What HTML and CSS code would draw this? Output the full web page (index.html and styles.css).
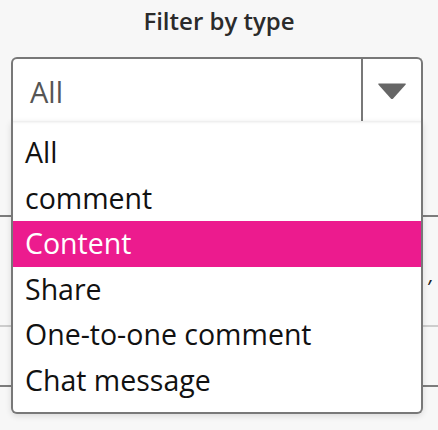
FILE: index.html
```html
<!DOCTYPE html>
<html lang="en">

<head>
    <meta charset="UTF-8">
    <meta name="viewport" content="width=device-width, initial-scale=1.0">
    <title>Filter</title>
    <link rel="stylesheet" href="styles.css">
</head>

<body>
    <main>
        <h2 class="title">Filter by type</h2>
        <div class="picker">
            <div class="select">
                <span class="value">All</span>
                <span class="arrow">
                    <svg width="30" height="18" viewBox="0 0 30 18">
                        <path d="M2 1.5 H28 Q29.5 1.5 28.5 2.7 L16.2 16.4 Q15 17.6 13.8 16.4 L1.5 2.7 Q0.5 1.5 2 1.5 Z" fill="#666"/>
                    </svg>
                </span>
            </div>
            <ul class="menu">
                <li>All</li>
                <li>comment</li>
                <li class="active">Content</li>
                <li>Share</li>
                <li>One-to-one comment</li>
                <li>Chat message</li>
            </ul>
        </div>
        <div class="rows">
            <div class="row row-a"></div>
            <div class="row row-b"><span class="tail">’</span></div>
            <div class="row row-c"></div>
        </div>
    </main>
</body>

</html>
```

FILE: styles.css
```css
* {
    margin: 0;
    padding: 0;
    box-sizing: border-box;
    list-style: none;
}

html,
body {
    width: 100%;
    height: 100%;
    background-color: #f7f7f7;
    font-family: "Open Sans", "Noto Sans", sans-serif;
    overflow: hidden;
}

.title {
    text-align: center;
    font-size: 24px;
    font-weight: 600;
    color: #2b2b2b;
    line-height: 30px;
    padding-top: 6px;
    height: 57px;
}

.picker {
    position: relative;
    margin: 0 15px 0 11px;
    z-index: 2;
}

.select {
    display: flex;
    height: 64px;
    background-color: #fff;
    border: 2px solid #787878;
    border-bottom: none;
    border-radius: 6px 6px 0 0;
}

.value {
    flex: 1;
    display: flex;
    align-items: center;
    padding-left: 17px;
    padding-top: 2px;
    font-size: 29px;
    color: #555;
}

.arrow {
    width: 60px;
    border-left: 2px solid #787878;
    display: flex;
    align-items: center;
    justify-content: center;
    padding-top: 2px;
}

.menu {
    position: absolute;
    top: 64px;
    left: 0;
    right: 0;
    background-color: #fff;
    border: 2px solid #787878;
    border-top: none;
    border-radius: 0 0 6px 6px;
    padding: 9px 0 9px;
    box-shadow: 0 2px 6px rgba(0, 0, 0, 0.12), inset 0 3px 3px -2px rgba(0, 0, 0, 0.1);
}

.menu li {
    height: 45.5px;
    line-height: 45.5px;
    padding-left: 12px;
    font-size: 28.5px;
    color: #111;
}

.menu li.active {
    background-color: #ec1b8e;
    color: #fff;
}

.rows {
    margin-top: -64px;
}

.row {
    position: relative;
}

.row-a {
    height: 160px;
    border-bottom: 2px solid #7c7c7c;
}

.row-b {
    height: 110px;
    border-bottom: 2px solid #cdcdcd;
}

.row-c {
    height: 60px;
    border-bottom: 2px solid #7c7c7c;
}

.tail {
    position: absolute;
    right: 8px;
    top: 56px;
    font-size: 20px;
    font-style: italic;
    color: #222;
}
```
